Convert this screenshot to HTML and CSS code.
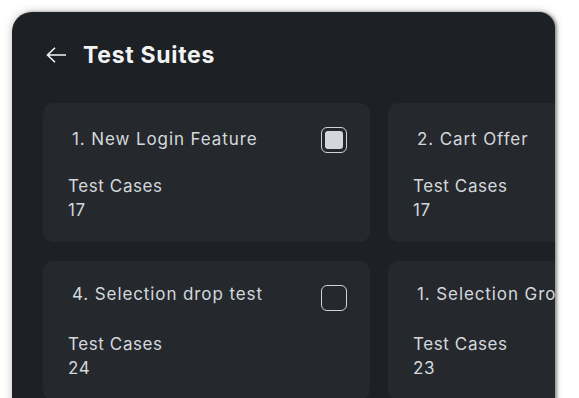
FILE: index.html
```html
<!DOCTYPE html>
<html>
<head>
<meta charset="utf-8">
<link rel="stylesheet" href="styles.css">
</head>
<body>
<div class="panel">
  <div class="header">
    <svg class="back" width="20" height="16" viewBox="0 0 20 16"><path d="M1.5 8H20M9 0.7L1.5 8L9 15.3" fill="none" stroke="#f2f3f4" stroke-width="1.6"/></svg>
    <h1 class="title">Test Suites</h1>
  </div>
  <div class="grid">
    <div class="card">
      <div class="card-top"><span class="name">1. New Login Feature</span><span class="check checked"><span class="fill"></span></span></div>
      <div class="label">Test Cases</div>
      <div class="count">17</div>
    </div>
    <div class="card">
      <div class="card-top"><span class="name">2. Cart Offer</span><span class="check"></span></div>
      <div class="label">Test Cases</div>
      <div class="count">17</div>
    </div>
    <div class="card card-low">
      <div class="card-top"><span class="name">4. Selection drop test</span><span class="check"></span></div>
      <div class="label">Test Cases</div>
      <div class="count">24</div>
    </div>
    <div class="card card-low">
      <div class="card-top"><span class="name">1. Selection Group</span><span class="check"></span></div>
      <div class="label">Test Cases</div>
      <div class="count">23</div>
    </div>
  </div>
</div>
</body>
</html>
```
FILE: styles.css
```css
html, body {
  margin: 0;
  padding: 0;
  background: #ffffff;
  overflow: hidden;
  height: 398px;
}
body {
  font-family: "Inter", "Noto Sans", "Liberation Sans", sans-serif;
}
.panel {
  margin: 12px 0 0 12px;
  width: 543px;
  height: 420px;
  background: #1d2024;
  border-radius: 20px 16px 0 0;
  box-shadow: 0 0 8px rgba(0,0,0,0.25), 2px 0 3px rgba(0,0,0,0.35);
  overflow: hidden;
  box-sizing: border-box;
  padding: 0 0 0 31px;
}
.header {
  display: flex;
  align-items: center;
  height: 86px;
  padding-left: 3px;
  box-sizing: border-box;
}
.back {
  display: block;
  margin-right: 17px;
}
.title {
  margin: 0;
  font-size: 23px;
  font-weight: 700;
  color: #f2f3f4;
  letter-spacing: 0.7px;
}
.grid {
  margin-top: 5px;
  display: grid;
  grid-template-columns: repeat(2, 327px);
  grid-auto-rows: 139px;
  gap: 19px 18px;
}
.card {
  background: #25282d;
  border-radius: 10px;
  padding: 24px 23px 0 25px;
  box-sizing: border-box;
  color: #d4d8dc;
  overflow: hidden;
}
.card-top {
  display: flex;
  justify-content: space-between;
  align-items: center;
  height: 26px;
}
.name {
  padding-left: 4px;
  padding-bottom: 3px;
  font-size: 17px;
  letter-spacing: 0.9px;
  white-space: nowrap;
}
.card-low .name {
  padding-bottom: 8px;
}
.check {
  flex: none;
  width: 26px;
  height: 26px;
  box-sizing: border-box;
  border: 1.5px solid #d0d4d8;
  border-radius: 6px;
  display: flex;
  align-items: center;
  justify-content: center;
}
.fill {
  width: 18px;
  height: 18px;
  background: #d3d7db;
  border-radius: 3px;
}
.label {
  margin-top: 21px;
  font-size: 17px;
  letter-spacing: 0.6px;
  line-height: 24px;
}
.count {
  font-size: 17px;
  letter-spacing: 0.6px;
  line-height: 24px;
}
```
